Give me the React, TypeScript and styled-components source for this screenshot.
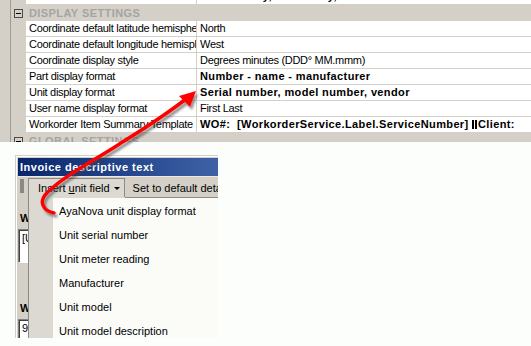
import React from 'react'
import styled, { createGlobalStyle } from 'styled-components'

const GlobalStyle = createGlobalStyle`
  html, body {
    margin: 0;
    padding: 0;
    background: #fcfefc;
  }
  body {
    font-family: "Liberation Sans", Arial, sans-serif;
    font-size: 11px;
    color: #000;
  }
`

const Page = styled.div`
  position: relative;
  width: 531px;
  height: 346px;
  overflow: hidden;
  display: flex;
  flex-direction: column;
  background: #fcfefc;
`

/* ---------- property grid ---------- */

const GridPane = styled.div`
  flex: none;
  height: 142px;
  overflow: hidden;
  display: flex;
  background: #d4d0c8;
`

const GridEdge = styled.div`
  flex: none;
  width: 10px;
  border-right: 1px solid #a09c94;
`

const GridTable = styled.div`
  flex: 1;
  margin-top: -11px;
  display: flex;
  flex-direction: column;
`

const Row = styled.div`
  display: grid;
  grid-template-columns: 15px 171px 1fr;
  height: 16px;
  flex: none;
`

const MarginCell = styled.div`
  background: #d4d0c8;
  display: flex;
  align-items: center;
  justify-content: center;
`

const NameCell = styled.div`
  background: #fff;
  height: 15px;
  line-height: 15px;
  padding-left: 3px;
  border-right: 1px solid #d4d0c8;
  border-bottom: 1px solid #d4d0c8;
  white-space: nowrap;
  overflow: hidden;
  letter-spacing: -0.3px;
`

const ValueCell = styled.div<{ $bold?: boolean }>`
  background: #fff;
  height: 15px;
  line-height: 15px;
  padding-left: 3px;
  border-bottom: 1px solid #d4d0c8;
  white-space: nowrap;
  overflow: hidden;
  font-weight: ${({ $bold }) => ($bold ? 700 : 400)};
  letter-spacing: ${({ $bold }) => ($bold ? '0.37px' : '-0.3px')};
`

const CategoryLabel = styled.div`
  grid-column: 2 / 4;
  line-height: 16px;
  padding-left: 3px;
  font-weight: 700;
  letter-spacing: 0.42px;
  color: #a4a4a4;
  white-space: nowrap;
`

const Collapse = styled.span`
  position: relative;
  width: 7px;
  height: 7px;
  border: 1px solid #4a4a4a;
  margin-top: 1px;

  &::after {
    content: '';
    position: absolute;
    left: 1px;
    top: 3px;
    width: 5px;
    height: 1px;
    background: #000;
  }
`

const Bars = styled.span`
  display: inline-block;
  width: 1px;
  height: 9px;
  border-left: 2px solid #000;
  border-right: 2px solid #000;
  margin-right: 1px;
  vertical-align: -1px;
`

/* ---------- dialog ---------- */

const BottomPane = styled.div`
  flex: 1;
  padding: 13px 0 0 15px;
`

const Dialog = styled.div`
  position: relative;
  width: 200px;
  height: 181px;
  overflow: hidden;
  background: #d4d0c8;
  border-top: 1px solid #d4d0c8;
  border-left: 1px solid #d4d0c8;
  box-shadow: inset 1px 1px #ffffff;
  padding: 1px 0 0 2px;
  display: flex;
  flex-direction: column;
`

const TitleBar = styled.div`
  flex: none;
  height: 18px;
  margin-top: 1px;
  line-height: 18px;
  padding-left: 2px;
  background: linear-gradient(to right, #0a266c 0%, #284a90 60%, #3f61a6 100%);
  color: #fff;
  font-weight: 700;
  letter-spacing: 0.5px;
  white-space: nowrap;
`

const Toolbar = styled.div`
  flex: none;
  height: 20px;
  border-top: 1px solid #ece9e2;
  padding-top: 1px;
  display: flex;
  align-items: flex-start;
  white-space: nowrap;
`

const Grip = styled.div`
  flex: none;
  width: 4px;
  height: 14px;
  margin: 1px 4px 0 2px;
  background-image: radial-gradient(circle, #8a867e 0.7px, transparent 0.9px);
  background-size: 2px 2px;
`

const ButtonWrap = styled.div`
  position: relative;
  flex: none;
`

const ToolButton = styled.div<{ $open?: boolean }>`
  height: 19px;
  line-height: 19px;
  box-sizing: border-box;
  padding: 0 4px 0 ${({ $open }) => ($open ? 9 : 7)}px;
  border: 1px solid ${({ $open }) => ($open ? '#8c8a84' : 'transparent')};
  border-bottom: none;
  background: ${({ $open }) => ($open ? '#dcd9d2' : 'transparent')};
  display: flex;
  align-items: center;
  gap: 4px;
`

const DropArrow = styled.span`
  width: 0;
  height: 0;
  border-left: 3px solid transparent;
  border-right: 3px solid transparent;
  border-top: 3px solid #000;
  margin-top: 1px;
`

const Menu = styled.div`
  position: absolute;
  top: 100%;
  left: 0;
  width: 200px;
  height: 160px;
  display: flex;
  border-left: 1px solid #8c8a84;
  border-top: 1px solid #8c8a84;
  z-index: 2;

  &::before {
    content: '';
    position: absolute;
    top: -1px;
    left: 0;
    width: 96px;
    height: 1px;
    background: #dcd9d2;
  }
`

const MenuGutter = styled.div`
  flex: none;
  width: 24px;
  background: #dcd9d2;
`

const MenuList = styled.div`
  flex: 1;
  background: #fbfcf8;
  padding-top: 1px;
  display: flex;
  flex-direction: column;
`

const MenuItem = styled.div`
  height: 24px;
  line-height: 24px;
  padding-left: 6px;
  white-space: nowrap;
`

const DialogBody = styled.div`
  flex: 1;
  padding: 14px 0 0 0;
  display: flex;
  flex-direction: column;
`

const FieldLabel = styled.div`
  height: 13px;
  line-height: 13px;
  margin-left: 2px;
  font-weight: 700;
  letter-spacing: 0.4px;
  white-space: nowrap;
`

const TextBox = styled.div<{ $height: number }>`
  flex: none;
  width: 180px;
  height: ${({ $height }) => $height}px;
  margin-top: 4px;
  box-sizing: border-box;
  background: #fff;
  border-top: 1px solid #808080;
  border-left: 1px solid #808080;
  border-right: 1px solid #fff;
  border-bottom: 1px solid #fff;
  box-shadow: inset 1px 1px #404040;
  padding: 2px 0 0 3px;
  line-height: 13px;
  white-space: nowrap;
  overflow: hidden;
`

const Spacer = styled.div<{ $h: number }>`
  flex: none;
  height: ${({ $h }) => $h}px;
`

/* ---------- callout arrow ---------- */

const Callout = styled.svg`
  position: absolute;
  left: 0;
  top: 0;
  pointer-events: none;
  z-index: 5;
`

const props = [
  { name: 'Coordinate default latitude hemisphere', value: 'North' },
  { name: 'Coordinate default longitude hemisphere', value: 'West' },
  { name: 'Coordinate display style', value: 'Degrees minutes (DDD° MM.mmm)' },
  { name: 'Part display format', value: 'Number - name - manufacturer', bold: true },
  { name: 'Unit display format', value: 'Serial number, model number, vendor', bold: true },
  { name: 'User name display format', value: 'First Last' },
]

const unitFields = [
  'AyaNova unit display format',
  'Unit serial number',
  'Unit meter reading',
  'Manufacturer',
  'Unit model',
  'Unit model description',
]

export default function App() {
  return (
    <Page>
      <GlobalStyle />

      <GridPane>
        <GridEdge />
        <GridTable>
          <Row>
            <MarginCell />
            <NameCell>Postal format</NameCell>
            <ValueCell $bold>Yes Delivery, Mandatory, ZIP 90000 United States</ValueCell>
          </Row>
          <Row>
            <MarginCell>
              <Collapse />
            </MarginCell>
            <CategoryLabel>DISPLAY SETTINGS</CategoryLabel>
          </Row>
          {props.map((p) => (
            <Row key={p.name}>
              <MarginCell />
              <NameCell>{p.name}</NameCell>
              <ValueCell $bold={p.bold}>{p.value}</ValueCell>
            </Row>
          ))}
          <Row>
            <MarginCell />
            <NameCell>Workorder Item Summary Template</NameCell>
            <ValueCell $bold>
              WO#:&nbsp; [WorkorderService.Label.ServiceNumber] <Bars />Client:
            </ValueCell>
          </Row>
          <Row>
            <MarginCell>
              <Collapse />
            </MarginCell>
            <CategoryLabel>GLOBAL SETTINGS</CategoryLabel>
          </Row>
        </GridTable>
      </GridPane>

      <BottomPane>
        <Dialog>
          <TitleBar>Invoice descriptive text</TitleBar>
          <Toolbar>
            <Grip />
            <ButtonWrap>
              <ToolButton $open>
                <span>
                  Insert <u>u</u>nit field
                </span>
                <DropArrow />
              </ToolButton>
              <Menu>
                <MenuGutter />
                <MenuList>
                  {unitFields.map((f) => (
                    <MenuItem key={f}>{f}</MenuItem>
                  ))}
                </MenuList>
              </Menu>
            </ButtonWrap>
            <ToolButton>Set to default details</ToolButton>
          </Toolbar>
          <DialogBody>
            <FieldLabel>Work order header</FieldLabel>
            <TextBox $height={34}>[Unit.Label.Serial]</TextBox>
            <Spacer $h={39} />
            <FieldLabel>Work order footer</FieldLabel>
            <TextBox $height={40}>9</TextBox>
          </DialogBody>
        </Dialog>
      </BottomPane>

      <Callout width={531} height={346} viewBox="0 0 531 346">
        <defs>
          <filter id="drop" x="-20%" y="-20%" width="140%" height="140%">
            <feDropShadow dx="2" dy="3" stdDeviation="1.2" floodColor="#3c3c3c" floodOpacity="0.55" />
          </filter>
        </defs>
        <g filter="url(#drop)">
          <path
            d="M 54 213 C 44 211, 39 203, 45 195 C 60 178, 90 163, 118 145 C 140 131, 160 119, 186 99"
            fill="none"
            stroke="#ff0000"
            strokeWidth={3.5}
            strokeLinecap="round"
          />
          <polygon points="196,91 179,96 190,107" fill="#ff0000" />
        </g>
      </Callout>
    </Page>
  )
}
